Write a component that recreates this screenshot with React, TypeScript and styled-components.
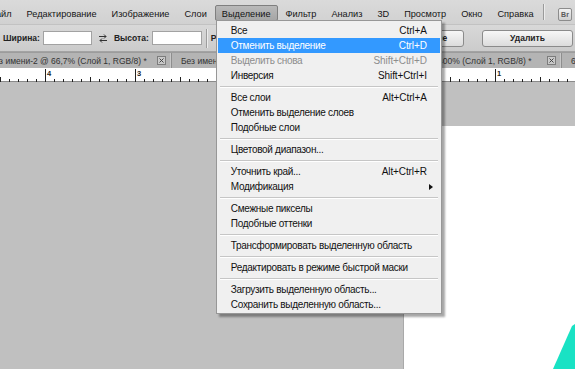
import React from 'react'
import styled, { createGlobalStyle } from 'styled-components'

const GlobalStyle = createGlobalStyle`
  * { box-sizing: border-box; }
  html, body { margin: 0; padding: 0; }
  body { width: 575px; height: 369px; overflow: hidden; background: #c0c0c0; }
`

const Root = styled.div`
  position: relative;
  width: 575px;
  height: 369px;
  display: flex;
  flex-direction: column;
  overflow: hidden;
  background: #c0c0c0;
  font-family: 'Liberation Sans', Arial, sans-serif;
  color: #151515;
`

/* ---------- menu bar ---------- */

const MenuBar = styled.div`
  flex: none;
  height: 25px;
  display: flex;
  align-items: flex-end;
  padding-bottom: 3px;
  margin-left: -18px;
  background: linear-gradient(#dadada, #d1d1d1);
  border-bottom: 1px solid #c2c2c2;
`

const MenuTitle = styled.div<{ $open?: boolean }>`
  position: relative;
  height: 16px;
  display: flex;
  align-items: center;
  padding: 2px 6px 0;
  margin-right: 1px;
  font-size: 9.2px;
  white-space: nowrap;
  border: 1px solid ${({ $open }) => ($open ? '#7f7f7f' : 'transparent')};
  border-radius: 2px;
  background: ${({ $open }) => ($open ? 'linear-gradient(#b9b9b9, #a6a6a6)' : 'transparent')};
`

const BarDivider = styled.div`
  align-self: center;
  width: 1px;
  height: 16px;
  margin: 2px 14px 0 auto;
  background: #9a9a9a;
  box-shadow: 1px 0 0 #ececec;
`

const BridgeIcon = styled.div`
  width: 14px;
  height: 13px;
  margin-right: 3px;
  display: flex;
  align-items: center;
  justify-content: center;
  font-size: 7px;
  font-weight: bold;
  color: #5a5a5a;
  border: 1px solid #8c8c8c;
  border-radius: 2px;
  background: linear-gradient(#f2f2f2, #cfcfcf);
`

/* ---------- dropdown ---------- */

const Dropdown = styled.div`
  position: absolute;
  top: 100%;
  left: 0;
  z-index: 10;
  width: 226px;
  padding: 2px 1px 1px;
  background: #f0f0f0;
  border: 1px solid #979797;
  box-shadow: 3px 3px 2px rgba(0, 0, 0, 0.35);
  font-size: 10px;
  letter-spacing: -0.3px;
`

const Row = styled.div<{ $active?: boolean; $disabled?: boolean }>`
  height: 15px;
  display: flex;
  align-items: center;
  padding: 0 13px 0 13px;
  white-space: nowrap;
  color: ${({ $active, $disabled }) => ($active ? '#fff' : $disabled ? '#8d8d8d' : '#111')};
  background: ${({ $active }) => ($active ? '#3399ff' : 'transparent')};
`

const Shortcut = styled.span`
  margin-left: auto;
  letter-spacing: -0.1px;
`

const SubArrow = styled.span`
  margin-left: auto;
  margin-right: -6px;
  width: 0;
  height: 0;
  border-top: 3px solid transparent;
  border-bottom: 3px solid transparent;
  border-left: 4px solid #111;
`

const Separator = styled.div`
  height: 2px;
  margin: 3px 2px 2px;
  border-top: 1px solid #c6c6c6;
  border-bottom: 1px solid #fff;
`

/* ---------- options bar ---------- */

const OptionsBar = styled.div`
  flex: none;
  height: 27px;
  display: flex;
  align-items: center;
  padding: 0 2px 0 3px;
  background: linear-gradient(#d8d8d8, #cbcbcb);
  border-bottom: 1px solid #a3a3a3;
`

const FieldLabel = styled.span`
  font-size: 8.5px;
  font-weight: bold;
  color: #222;
  margin-right: 3px;
  white-space: nowrap;
`

const Field = styled.div<{ $w: number }>`
  width: ${({ $w }) => $w}px;
  height: 14px;
  background: #fff;
  border: 1px solid #a2a2a2;
`

const SwapButton = styled.div`
  width: 22px;
  display: flex;
  justify-content: center;
`

const VDivider = styled.div`
  width: 1px;
  height: 19px;
  margin: 0 4px;
  background: #9d9d9d;
  box-shadow: 1px 0 0 #ececec;
`

const Spacer = styled.div`
  flex: 1;
`

const PushButton = styled.div<{ $w: number }>`
  width: ${({ $w }) => $w}px;
  height: 17px;
  margin-left: 18px;
  display: flex;
  align-items: center;
  justify-content: center;
  font-size: 8.5px;
  font-weight: bold;
  color: #222;
  border: 1px solid #8b8b8b;
  border-radius: 3px;
  background: linear-gradient(#f7f7f7, #dcdcdc);
`

/* ---------- tabs ---------- */

const TabBar = styled.div`
  flex: none;
  height: 16px;
  display: flex;
  margin-left: -20px;
  background: #b4b4b4;
  border-top: 1px solid #9c9c9c;
`

const Tab = styled.div<{ $w: number }>`
  flex: none;
  width: ${({ $w }) => $w}px;
  display: flex;
  align-items: center;
  padding: 0 5px 0 9px;
  font-size: 8.5px;
  color: #333;
  white-space: nowrap;
  overflow: hidden;
  border-right: 1px solid #8e8e8e;
  box-shadow: inset -1px 0 0 #c8c8c8;
`

const CloseBox = styled.span`
  margin-left: auto;
  width: 9px;
  height: 9px;
  flex: none;
  display: flex;
  align-items: center;
  justify-content: center;
  border: 1px solid #7c7c7c;
  background: #c9c9c9;
`

/* ---------- ruler / workspace ---------- */

const Ruler = styled.div`
  flex: none;
  height: 14px;
  background: #fff;
  border-bottom: 1px solid #8a8a8a;
`

const Workspace = styled.div`
  flex: 1;
  display: flex;
  padding: 44px 0 0 404px;
  background: #c0c0c0;
`

const Document = styled.div`
  position: relative;
  flex: 1;
  background: #fff;
  box-shadow: -1px 0 0 #a9a9a9;
  overflow: hidden;
`

const Shape = styled.svg`
  position: absolute;
  right: 0;
  bottom: 0;
`

type Entry = {
  label?: string
  shortcut?: string
  active?: boolean
  disabled?: boolean
  submenu?: boolean
  sep?: boolean
}

const entries: Entry[] = [
  { label: 'Все', shortcut: 'Ctrl+A' },
  { label: 'Отменить выделение', shortcut: 'Ctrl+D', active: true },
  { label: 'Выделить снова', shortcut: 'Shift+Ctrl+D', disabled: true },
  { label: 'Инверсия', shortcut: 'Shift+Ctrl+I' },
  { sep: true },
  { label: 'Все слои', shortcut: 'Alt+Ctrl+A' },
  { label: 'Отменить выделение слоев' },
  { label: 'Подобные слои' },
  { sep: true },
  { label: 'Цветовой диапазон...' },
  { sep: true },
  { label: 'Уточнить край...', shortcut: 'Alt+Ctrl+R' },
  { label: 'Модификация', submenu: true },
  { sep: true },
  { label: 'Смежные пикселы' },
  { label: 'Подобные оттенки' },
  { sep: true },
  { label: 'Трансформировать выделенную область' },
  { sep: true },
  { label: 'Редактировать в режиме быстрой маски' },
  { sep: true },
  { label: 'Загрузить выделенную область...' },
  { label: 'Сохранить выделенную область...' },
]

const menus = ['Файл', 'Редактирование', 'Изображение', 'Слои', 'Выделение', 'Фильтр', 'Анализ', '3D', 'Просмотр', 'Окно', 'Справка']

const tabs = [
  { title: 'Без имени-2 @ 66,7% (Слой 1, RGB/8) *', w: 192 },
  { title: 'Без имени-3 @ 66,7% (Слой 1, RGB/8) *', w: 195 },
  { title: 'Без имени-1 @ 400% (Слой 1, RGB/8) *', w: 195 },
  { title: '6.jpg @ 100% (RGB/8)', w: 120 },
]

const SelectMenu = () => (
  <Dropdown>
    {entries.map((e, i) =>
      e.sep ? (
        <Separator key={i} />
      ) : (
        <Row key={i} $active={e.active} $disabled={e.disabled}>
          {e.label}
          {e.shortcut && <Shortcut>{e.shortcut}</Shortcut>}
          {e.submenu && <SubArrow />}
        </Row>
      ),
    )}
  </Dropdown>
)

const RulerMarks = () => {
  const ticks = []
  const labels = ['4', '3', '2', '1', '0', '1']
  for (let x = 0; x <= 575; x += 9) {
    const off = (x - 45 + 900) % 90
    const len = off === 0 ? 13 : off === 45 ? 5 : 3
    ticks.push(<line key={x} x1={x + 0.5} x2={x + 0.5} y1={13 - len} y2={13} stroke="#222" strokeWidth={1} />)
  }
  return (
    <svg width={575} height={13}>
      {ticks}
      {labels.map((l, i) => (
        <text key={i} x={47 + i * 90} y={7} fontSize={7.5} fontWeight="bold" fontFamily="Liberation Sans, Arial, sans-serif" fill="#222">
          {l}
        </text>
      ))}
    </svg>
  )
}

const App = () => (
  <Root>
    <GlobalStyle />
    <MenuBar>
      {menus.map((m) => (
        <MenuTitle key={m} $open={m === 'Выделение'}>
          {m}
          {m === 'Выделение' && <SelectMenu />}
        </MenuTitle>
      ))}
      <BarDivider />
      <BridgeIcon>Br</BridgeIcon>
    </MenuBar>

    <OptionsBar>
      <FieldLabel>Ширина:</FieldLabel>
      <Field $w={49} />
      <SwapButton>
        <svg width={10} height={9} viewBox="0 0 10 9">
          <path d="M1 2.5h7M6 0.5l2 2-2 2" fill="none" stroke="#333" strokeWidth={1} />
          <path d="M9 6.5h-7M4 4.5l-2 2 2 2" fill="none" stroke="#333" strokeWidth={1} />
        </svg>
      </SwapButton>
      <FieldLabel>Высота:</FieldLabel>
      <Field $w={50} />
      <VDivider />
      <FieldLabel>Разрешение:</FieldLabel>
      <Field $w={46} />
      <Spacer />
      <PushButton $w={90}>Изображение</PushButton>
      <PushButton $w={91}>Удалить</PushButton>
    </OptionsBar>

    <TabBar>
      {tabs.map((t) => (
        <Tab key={t.title} $w={t.w}>
          {t.title}
          <CloseBox>
            <svg width={5} height={5} viewBox="0 0 5 5">
              <path d="M0.5 0.5l4 4M4.5 0.5l-4 4" stroke="#444" strokeWidth={1} />
            </svg>
          </CloseBox>
        </Tab>
      ))}
    </TabBar>

    <Ruler>
      <RulerMarks />
    </Ruler>

    <Workspace>
      <Document>
        <Shape width={24} height={46} viewBox="0 0 24 46">
          <polygon points="2,46 21,3 24,1 24,46" fill="#19e2c4" />
        </Shape>
      </Document>
    </Workspace>
  </Root>
)

export default App
